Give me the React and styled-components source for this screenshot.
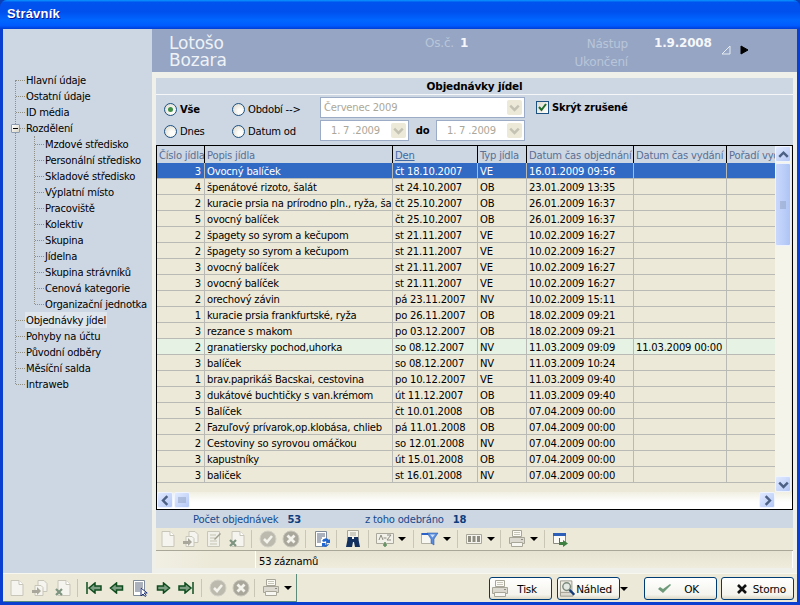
import React from "react";
import styled, { createGlobalStyle } from "styled-components";

const GlobalStyle = createGlobalStyle`
  html, body {
    margin: 0;
    padding: 0;
    background: #0a3fb5;
    overflow: hidden;
  }
  * {
    box-sizing: border-box;
  }
`;

const Window = styled.div`
  width: 800px;
  height: 605px;
  display: flex;
  flex-direction: column;
  font-family: "DejaVu Sans", sans-serif;
  font-size: 10px;
  letter-spacing: -0.2px;
  color: #000;
  background: #0a3fd0;
  border-radius: 7px 7px 0 0;
  overflow: hidden;
`;

const TitleBar = styled.div`
  height: 29px;
  flex: none;
  display: flex;
  align-items: center;
  padding: 0 0 2px 7px;
  color: #fff;
  font-family: "Liberation Sans", sans-serif;
  font-weight: 700;
  font-size: 13px;
  letter-spacing: 0.2px;
  text-shadow: 1px 1px 0 #0f1089;
  background: linear-gradient(
    180deg,
    #0997ff 0,
    #0053ee 8%,
    #0050ee 40%,
    #0066ff 70%,
    #005bff 88%,
    #003dd7 100%
  );
`;

const Client = styled.div`
  flex: 1;
  margin: 0 3px 3px;
  display: flex;
  flex-direction: column;
  background: #ece9d8;
  min-height: 0;
`;

const MainRow = styled.div`
  height: 544px;
  display: flex;
  flex: none;
`;

const Sidebar = styled.nav`
  width: 149px;
  flex: none;
  padding-top: 43px;
  background: #cdd7e4;
`;

const TreeList = styled.div`
  position: relative;
  &::before {
    content: "";
    position: absolute;
    left: 12px;
    top: 8px;
    bottom: 8px;
    border-left: 1px dotted #8f8f86;
  }
`;

const SubList = styled.div`
  position: relative;
  &::before {
    content: "";
    position: absolute;
    left: 31px;
    top: 0;
    bottom: 8px;
    border-left: 1px dotted #8f8f86;
  }
`;

const TreeRow = styled.div`
  position: relative;
  height: 16px;
  line-height: 17px;
  white-space: nowrap;
  padding-left: ${(p) => (p.$sub ? 41 : 22)}px;
  &::before {
    content: "";
    position: absolute;
    left: ${(p) => (p.$sub ? 32 : 13)}px;
    width: 9px;
    top: 8px;
    border-top: 1px dotted #8f8f86;
  }
`;

const TreeLabel = styled.span`
  display: inline-block;
  height: 16px;
  padding: 0 1px;
  background: ${(p) => (p.$active ? "#dfe5ed" : "transparent")};
`;

const Expander = styled.span`
  position: absolute;
  left: 8px;
  top: 4px;
  width: 9px;
  height: 9px;
  background: linear-gradient(135deg, #fff, #d8d4c4);
  border: 1px solid #8d9bb0;
  border-radius: 1px;
  z-index: 1;
  &::after {
    content: "";
    position: absolute;
    left: 1px;
    right: 1px;
    top: 3px;
    height: 1px;
    background: #000;
  }
`;

const Content = styled.div`
  flex: 1;
  display: flex;
  flex-direction: column;
  background: #f0f0ea;
  min-width: 0;
`;

const Header = styled.header`
  height: 43px;
  flex: none;
  display: flex;
  padding: 6px 0 0 17px;
  background: #95a5c3;
  color: #b9c5da;
  font-size: 12px;
  margin-bottom: 6px;
`;

const PersonName = styled.div`
  width: 256px;
  flex: none;
  color: #eef2f7;
  font-size: 17px;
  line-height: 17px;
`;

const OsBlock = styled.div`
  width: 130px;
  flex: none;
  display: flex;
  gap: 6px;
  height: 16px;
  line-height: 17px;
  b {
    color: #f5f7fa;
  }
`;

const DateLabels = styled.div`
  width: 73px;
  flex: none;
  text-align: right;
  line-height: 18px;
`;

const DateValue = styled.div`
  width: 66px;
  margin-left: 26px;
  flex: none;
  color: #f5f7fa;
  font-weight: 700;
  line-height: 16px;
`;

const Arrows = styled.div`
  display: flex;
  gap: 8px;
  margin-top: 10px;
  height: 10px;
`;

const Panel = styled.section`
  flex: 1;
  margin: 0 4px 5px;
  display: flex;
  flex-direction: column;
  background: #cdd7e4;
  min-height: 0;
`;

const PanelTitle = styled.div`
  height: 17px;
  flex: none;
  line-height: 16px;
  text-align: center;
  font-weight: 700;
  font-size: 10.5px;
  border-bottom: 1px solid #f4f6f8;
`;

const Filter = styled.div`
  height: 50px;
  flex: none;
  padding: 2px 0 0 8px;
  display: grid;
  grid-template-columns: 68px 88px 205px auto;
  grid-template-rows: 21px 21px;
  row-gap: 2px;
  align-items: center;
`;

const RadioLabel = styled.div`
  display: flex;
  align-items: center;
  gap: 3px;
  padding-top: ${(p) => (p.$first ? 3 : 1)}px;
  font-weight: ${(p) => (p.$bold ? 700 : 400)};
`;

const RadioDot = styled.span`
  width: 13px;
  height: 13px;
  flex: none;
  border-radius: 50%;
  border: 1px solid #1c5180;
  background: radial-gradient(circle at 65% 65%, #fdfdfb 20%, #dcd9cc 90%);
  display: flex;
  align-items: center;
  justify-content: center;
  &::after {
    content: "";
    width: 5px;
    height: 5px;
    border-radius: 50%;
    background: ${(p) => (p.$on ? "#3f8f47" : "transparent")};
  }
`;

const Field = styled.div`
  width: ${(p) => (p.$wide ? "205px" : "89px")};
  height: 21px;
  flex: none;
  display: flex;
  align-items: center;
  justify-content: space-between;
  padding: 0 2px 0 ${(p) => (p.$wide ? 3 : 10)}px;
  background: #fff;
  border: 1px solid #9cacc7;
  color: #aca899;
  font-weight: 400;
`;

const FieldButton = styled.span`
  width: 15px;
  height: 15px;
  display: flex;
  align-items: center;
  justify-content: center;
  background: #ece9d8;
  border-radius: 2px;
`;

const DateRow = styled.div`
  display: flex;
  align-items: center;
  justify-content: space-between;
  font-weight: 700;
`;

const CheckLabel = styled.div`
  display: flex;
  align-items: center;
  gap: 3px;
  margin-left: 11px;
  font-weight: 700;
`;

const CheckBox = styled.span`
  width: 13px;
  height: 13px;
  display: flex;
  align-items: center;
  justify-content: center;
  border: 1px solid #1c5180;
  background: linear-gradient(135deg, #dcd9cc, #fff);
`;

const GridFrame = styled.div`
  height: 365px;
  flex: none;
  display: flex;
  flex-direction: column;
  border: 1px solid #000;
  background: #ece9d8;
`;

const GridMain = styled.div`
  flex: 1;
  display: flex;
  min-height: 0;
`;

const TableArea = styled.div`
  width: 618px;
  flex: none;
  overflow: hidden;
`;

const Table = styled.table`
  width: 618px;
  table-layout: fixed;
  border-collapse: separate;
  border-spacing: 0;
`;

const HeadCell = styled.th`
  height: 17px;
  padding: 1px 0 0 2px;
  text-align: left;
  font-weight: 400;
  white-space: nowrap;
  overflow: hidden;
  color: ${(p) => (p.$sorted ? "#3f6aa5" : "#5a6f93")};
  text-decoration: ${(p) => (p.$sorted ? "underline" : "none")};
  background: #cdd7e4;
  border-right: 1px solid #000;
  &:last-child {
    border-right: 0;
  }
`;

const Row = styled.tr`
  color: ${(p) => (p.$selected ? "#fff" : "#000")};
  background: ${(p) =>
    p.$selected ? "#316ac5" : p.$done ? "#e6f2e3" : "#ece9d8"};
`;

const Cell = styled.td`
  height: 16px;
  padding: 1px ${(p) => (p.$num ? 3 : 0)}px 0 2px;
  text-align: ${(p) => (p.$num ? "right" : "left")};
  white-space: nowrap;
  overflow: hidden;
  border-right: 1px solid #b9b9b6;
  border-bottom: 1px solid #b9b9b6;
  &:last-child {
    border-right: 0;
  }
`;

const VScroll = styled.div`
  width: 16px;
  flex: none;
  display: flex;
  flex-direction: column;
  background: #f5f4ea;
`;

const ScrollArrow = styled.div`
  width: 16px;
  height: 16px;
  flex: none;
  display: flex;
  align-items: center;
  justify-content: center;
  border: 1px solid #f0f4fd;
  border-radius: 2px;
  background: linear-gradient(135deg, #e1eaff, #b4c8f6);
`;

const VTrack = styled.div`
  flex: 1;
  padding-top: 1px;
`;

const VThumb = styled.div`
  height: 83px;
  display: flex;
  align-items: center;
  justify-content: center;
  border: 1px solid #eef2fd;
  border-radius: 2px;
  background: linear-gradient(90deg, #c9d8fc, #bacdf8 60%, #aec4f4);
`;

const HScroll = styled.div`
  height: 17px;
  flex: none;
  display: flex;
  background: linear-gradient(180deg, #f1efe2, #fff 60%);
  padding-right: 17px;
`;

const HThumb = styled(ScrollArrow)`
  margin-left: 1px;
`;

const HSpacer = styled.div`
  flex: 1;
`;

const Summary = styled.div`
  height: 18px;
  flex: none;
  display: flex;
  align-items: center;
  padding-left: 37px;
  color: #164a8c;
  b {
    margin-left: 6px;
    color: #0d3d7c;
  }
`;

const SummaryItem = styled.span`
  width: ${(p) => p.$width}px;
  flex: none;
`;

const Toolbar = styled.div`
  height: 23px;
  flex: none;
  display: flex;
  align-items: center;
  background: #ece9d8;
  border-bottom: 1px solid #a9a797;
`;

const ToolButton = styled.span`
  width: 23px;
  height: 20px;
  flex: none;
  display: flex;
  align-items: center;
  justify-content: center;
`;

const Caret = styled.span`
  width: ${(p) => p.$width || 12}px;
  flex: none;
  display: flex;
  justify-content: center;
  &::after {
    content: "";
    border-left: 4px solid transparent;
    border-right: 4px solid transparent;
    border-top: 4px solid #000;
  }
`;

const Sep = styled.span`
  width: 1px;
  height: 18px;
  flex: none;
  margin: 0 4px 0 ${(p) => p.$left || 3}px;
  background: #c9c6b5;
`;

const StatusBar = styled.div`
  height: 17px;
  flex: none;
  display: flex;
  background: linear-gradient(180deg, #e6e3d2, #efecdd);
  border-right: 1px solid #fff;
`;

const StatusLeft = styled.div`
  width: 100px;
  flex: none;
  background: linear-gradient(90deg, #f1efe3, #ece9d8 60%);
  border-right: 1px solid #fff;
`;

const StatusText = styled.div`
  padding: 2px 0 0 3px;
  line-height: 17px;
`;

const BottomBar = styled.footer`
  flex: 1;
  display: flex;
  align-items: stretch;
  justify-content: space-between;
  background: #ece9d8;
  border-top: 1px solid #f7f6ef;
`;

const NavTools = styled.div`
  width: 294px;
  flex: none;
  display: flex;
  align-items: center;
  padding-left: 2px;
  border-right: 1px solid #5b8c7c;
  border-bottom: 1px solid #5b8c7c;
`;

const Actions = styled.div`
  display: flex;
  align-items: center;
  padding: 1px 3px 0 0;
`;

const PushButton = styled.div`
  width: ${(p) => p.$width || 63}px;
  height: 23px;
  margin-left: ${(p) => p.$left || 0}px;
  flex: none;
  display: flex;
  align-items: center;
  justify-content: space-between;
  padding: 0 ${(p) => p.$padRight}px 0 ${(p) => p.$padLeft}px;
  border: 1px solid #003c74;
  border-radius: 3px;
  font-size: 10.5px;
  background: linear-gradient(180deg, #fff, #f4f3ec 80%, #dcd8c7);
`;

const Ic = ({ children, w = 18, h = 18 }) => (
  <svg width={w} height={h} viewBox={`0 0 ${w} ${h}`}>
    {children}
  </svg>
);

const PageIcon = () => (
  <Ic>
    <path d="M3 1.5h8l4 4v11H3z" fill="#f5f4ee" stroke="#c8c6b8" />
    <path d="M11 1.5v4h4" fill="#fff" stroke="#c8c6b8" />
  </Ic>
);

const CopyIcon = () => (
  <Ic>
    <path d="M7 1.5h6l3 3v8H7z" fill="#f5f4ee" stroke="#c8c6b8" />
    <path d="M4 6.5h6l2 2v8H4z" fill="#f5f4ee" stroke="#c8c6b8" />
    <path d="M1 11h5V8l4 4-4 4v-2H1z" fill="#a9a79c" />
  </Ic>
);

const EditIcon = () => (
  <Ic>
    <path d="M2.5 1.5h12v15h-12z" fill="#f1f0e8" stroke="#c8c6b8" />
    <path d="M5 5h6M5 8h5M5 11h7M5 14h7" stroke="#c5c3b4" />
    <path d="M9 9l6-6 1 1-6 6z" fill="#9f9d90" />
  </Ic>
);

const DeleteIcon = () => (
  <Ic>
    <path d="M4 1.5h8l4 4v11H4z" fill="#f5f4ee" stroke="#c8c6b8" />
    <path d="M12 1.5v4h4" fill="#fff" stroke="#c8c6b8" />
    <path d="M2 10l6 6M8 10l-6 6" stroke="#7d9480" strokeWidth="2.2" />
  </Ic>
);

const CheckRound = () => (
  <Ic>
    <circle cx="9" cy="9" r="8" fill="#bcbaae" stroke="#d3d1c6" />
    <path d="M5 9l3 3 5-6" fill="none" stroke="#f4f3ec" strokeWidth="2.6" />
  </Ic>
);

const CrossRound = () => (
  <Ic>
    <circle cx="9" cy="9" r="8" fill="#a9a79c" stroke="#c9c7bb" />
    <path d="M5.5 5.5l7 7M12.5 5.5l-7 7" stroke="#f4f3ec" strokeWidth="2.8" />
  </Ic>
);

const RefreshIcon = () => (
  <Ic>
    <path d="M2.5 1.5h11v15h-11z" fill="#fff" stroke="#7f8b99" />
    <path d="M4 4h8M4 6h8M4 8h5M4 10h4M4 12h4" stroke="#56657a" />
    <path d="M9 11a4 4 0 0 1 7-1l1-1v4h-4l1-1a2 2 0 0 0-3 0z" fill="#1f66d1" />
    <path d="M16 14a4 4 0 0 1-6 2l-1 1v-4h4l-1 1a2 2 0 0 0 3 0z" fill="#1f66d1" />
  </Ic>
);

const FindIcon = () => (
  <Ic>
    <path d="M3.500 0.500h11v9h-11z" fill="#f4f3ec" stroke="#a8a699" />
    <path d="M6 3h6M6 5h6" stroke="#a8a699" />
    <path d="M4 7h4v2h2V7h4l2 10h-5l-1-5H9l-1 5H2z" fill="#12305f" />
  </Ic>
);

const SortIcon = () => (
  <Ic w={20}>
    <path d="M1.5 3.5h17v10h-17z" fill="#f2f1e9" stroke="#aaa89b" />
    <path d="M4 10l2-5 2 5M12 5h4l-4 5h4M8.5 8h3" fill="none" stroke="#8e8c80" />
    <path d="M10 12v5M8 15h4" stroke="#5e8d5e" strokeWidth="1.5" />
  </Ic>
);

const FunnelIcon = () => (
  <Ic w={20}>
    <path d="M1.5 3.5h12v10h-12z" fill="#f7f6f0" stroke="#b3b1a4" />
    <path d="M1.5 3h12v2h-12z" fill="#2c62c8" />
    <path d="M7 3h11l-4 6v6l-3-2V9z" fill="#5b8ede" stroke="#1b4da8" strokeWidth="0.5" />
    <path d="M10 4.500h5l-2.500 3z" fill="#cfe0f8" />
  </Ic>
);

const ColumnsIcon = () => (
  <Ic w={20}>
    <path d="M2.5 4.5h15v9h-15z" fill="#f5f4ee" stroke="#a8a699" />
    <path d="M4 6h3v6H4zM8.5 6h3v6h-3zM13 6h3v6h-3z" fill="#8e8c80" />
  </Ic>
);

const PrinterIcon = () => (
  <Ic w={18} h={18}>
    <path d="M4.500 0.500h9v6h-9z" fill="#fbfaf5" stroke="#a8a699" />
    <path d="M6 2.500h6M6 4.500h6" stroke="#c8c6b8" />
    <path d="M1.500 7.500h15v6h-15z" fill="#dcdad0" stroke="#a8a699" />
    <path d="M3.500 12.500h11v4h-11z" fill="#f7f6f0" stroke="#a8a699" />
    <path d="M13 9.500h2" stroke="#8e8c80" />
  </Ic>
);

const WindowArrowIcon = () => (
  <Ic w={18}>
    <path d="M1.500 3.500h12v10h-12z" fill="#fbfaf5" stroke="#8a8a80" />
    <path d="M1 3h13v3H1z" fill="#2d5fb8" />
    <path d="M8 8v4h3v-2l5 3.500-5 3.500v-2H7V8z" fill="#3f7f3f" />
  </Ic>
);

const GreenArrow = ({ flip, bar }) => (
  <svg width="16" height="12" viewBox="0 0 16 12">
    <g transform={flip ? "matrix(-1 0 0 1 16 0)" : undefined}>
      <path
        d={bar ? "M1 4h6V1l6 5-6 5V8H1z" : "M2.500 4h6V1l6 5-6 5V8h-6z"}
        fill="#7f9f85"
        stroke="#0f4d1f"
        strokeWidth="1.500"
      />
      {bar && <path d="M15 0v12" stroke="#0f4d1f" strokeWidth="1.500" />}
    </g>
  </svg>
);

const DocCursorIcon = () => (
  <Ic>
    <path d="M2.500 1.500h11v15h-11z" fill="#fff" stroke="#7f8b99" />
    <path d="M4 4h8M4 6h8M4 8h8M4 10h5M4 12h5" stroke="#56657a" />
    <path d="M10 9v8l2-2 2 2.500 1.200-1-2-2.500h3z" fill="#fff" stroke="#1c2f70" />
  </Ic>
);

const PreviewIcon = () => (
  <Ic>
    <path d="M1.500 0.500h12v14h-12z" fill="#eeede5" stroke="#9a988b" />
    <path d="M1.500 12.500h13v4h-13z" fill="#dcdad0" stroke="#9a988b" />
    <circle cx="8" cy="6.500" r="4" fill="#e4e9e3" stroke="#7c8a7c" strokeWidth="1.500" />
    <path d="M11 10l5 5" stroke="#123b7c" strokeWidth="2.500" />
  </Ic>
);

const Chevron = ({ up, left, right, color = "#4d6185", size = 11 }) => {
  const d = up
    ? "M1 6.500l3.500-3.500L8 6.500"
    : left
      ? "M6 1L2.500 4.500 6 8"
      : right
        ? "M3 1l3.500 3.500L3 8"
        : "M1 3l3.500 3.500L8 3";
  return (
    <svg width={size} height={size} viewBox="0 0 9 9">
      <path d={d} fill="none" stroke={color} strokeWidth="2" />
    </svg>
  );
};

const Grip = ({ vertical }) => (
  <svg width="8" height="8" viewBox="0 0 8 8">
    <path
      d={vertical ? "M1 1v6M3 1v6M5 1v6M7 1v6" : "M1 1h6M1 3h6M1 5h6M1 7h6"}
      stroke="#8fa0c0"
    />
  </svg>
);

const Triangle = ({ filled }) => (
  <svg width="12" height="10" viewBox="0 0 12 10">
    <path
      d={filled ? "M1 1l7 4-7 4z" : "M10 1v8H2z"}
      fill={filled ? "#000" : "none"}
      stroke={filled ? "#000" : "#e6ecf4"}
    />
  </svg>
);

const tree = {
  top: ["Hlavní údaje", "Ostatní údaje", "ID média", "Rozdělení"],
  sub: [
    "Mzdové středisko",
    "Personální středisko",
    "Skladové středisko",
    "Výplatní místo",
    "Pracoviště",
    "Kolektiv",
    "Skupina",
    "Jídelna",
    "Skupina strávníků",
    "Cenová kategorie",
    "Organizační jednotka",
  ],
  rest: ["Objednávky jídel", "Pohyby na účtu", "Původní odběry", "Měsíční salda", "Intraweb"],
};

const columns = [
  { title: "Číslo jídla", width: 48 },
  { title: "Popis jídla", width: 188 },
  { title: "Den", width: 85, sorted: true },
  { title: "Typ jídla", width: 49 },
  { title: "Datum čas objednání", width: 107 },
  { title: "Datum čas vydání", width: 93 },
  { title: "Pořadí vydání", width: 48 },
];

const orders = [
  [3, "Ovocný balíček", "čt 18.10.2007", "VE", "16.01.2009 09:56"],
  [4, "špenátové rizoto, šalát", "st 24.10.2007", "OB", "23.01.2009 13:35"],
  [2, "kuracie prsia na prírodno pln., ryža, šalát", "čt 25.10.2007", "OB", "26.01.2009 16:37"],
  [5, "ovocný balíček", "čt 25.10.2007", "OB", "26.01.2009 16:37"],
  [2, "špagety so syrom a kečupom", "st 21.11.2007", "VE", "10.02.2009 16:27"],
  [2, "špagety so syrom a kečupom", "st 21.11.2007", "VE", "10.02.2009 16:27"],
  [3, "ovocný balíček", "st 21.11.2007", "VE", "10.02.2009 16:27"],
  [3, "ovocný balíček", "st 21.11.2007", "VE", "10.02.2009 16:27"],
  [2, "orechový závin", "pá 23.11.2007", "NV", "10.02.2009 15:11"],
  [1, "kuracie prsia frankfurtské, ryža", "po 26.11.2007", "OB", "18.02.2009 09:21"],
  [3, "rezance s makom", "po 03.12.2007", "OB", "18.02.2009 09:21"],
  [2, "granatiersky pochod,uhorka", "so 08.12.2007", "NV", "11.03.2009 09:09", "11.03.2009 00:00"],
  [3, "balíček", "so 08.12.2007", "NV", "11.03.2009 10:24"],
  [1, "brav.paprikáš Bacskai, cestovina", "po 10.12.2007", "VE", "11.03.2009 09:40"],
  [3, "dukátové buchtičky s van.krémom", "út 11.12.2007", "OB", "11.03.2009 09:40"],
  [5, "Balíček", "čt 10.01.2008", "OB", "07.04.2009 00:00"],
  [2, "Fazuľový prívarok,op.klobása, chlieb", "pá 11.01.2008", "OB", "07.04.2009 00:00"],
  [2, "Cestoviny so syrovou omáčkou", "so 12.01.2008", "NV", "07.04.2009 00:00"],
  [3, "kapustníky", "út 15.01.2008", "OB", "07.04.2009 00:00"],
  [3, "baliček", "st 16.01.2008", "NV", "07.04.2009 00:00"],
];

function App() {
  return (
    <Window>
      <GlobalStyle />
      <TitleBar>Strávník</TitleBar>
      <Client>
        <MainRow>
          <Sidebar>
            <TreeList>
              {tree.top.map((item) => (
                <TreeRow key={item}>
                  {item === "Rozdělení" && <Expander />}
                  <TreeLabel>{item}</TreeLabel>
                </TreeRow>
              ))}
              <SubList>
                {tree.sub.map((item) => (
                  <TreeRow key={item} $sub>
                    <TreeLabel>{item}</TreeLabel>
                  </TreeRow>
                ))}
              </SubList>
              {tree.rest.map((item) => (
                <TreeRow key={item}>
                  <TreeLabel $active={item === "Objednávky jídel"}>{item}</TreeLabel>
                </TreeRow>
              ))}
            </TreeList>
          </Sidebar>
          <Content>
            <Header>
              <PersonName>
                Lotošo
                <br />
                Bozara
              </PersonName>
              <OsBlock>
                Os.č. <b>1</b>
              </OsBlock>
              <DateLabels>
                Nástup
                <br />
                Ukončení
              </DateLabels>
              <DateValue>1.9.2008</DateValue>
              <Arrows>
                <Triangle />
                <Triangle filled />
              </Arrows>
            </Header>
            <Panel>
              <PanelTitle>Objednávky jídel</PanelTitle>
              <Filter>
                <RadioLabel $bold $first>
                  <RadioDot $on />
                  Vše
                </RadioLabel>
                <RadioLabel $first>
                  <RadioDot />
                  Období --&gt;
                </RadioLabel>
                <Field $wide>
                  Červenec 2009
                  <FieldButton>
                    <Chevron color="#c4c2b3" />
                  </FieldButton>
                </Field>
                <CheckLabel>
                  <CheckBox>
                    <svg width="9" height="9" viewBox="0 0 9 9">
                      <path d="M1 4l2.500 3L8 1" fill="none" stroke="#1f6b2a" strokeWidth="2" />
                    </svg>
                  </CheckBox>
                  Skrýt zrušené
                </CheckLabel>
                <RadioLabel>
                  <RadioDot />
                  Dnes
                </RadioLabel>
                <RadioLabel>
                  <RadioDot />
                  Datum od
                </RadioLabel>
                <DateRow>
                  <Field>
                    1. 7 .2009
                    <FieldButton>
                      <Chevron color="#c4c2b3" />
                    </FieldButton>
                  </Field>
                  do
                  <Field>
                    1. 7 .2009
                    <FieldButton>
                      <Chevron color="#c4c2b3" />
                    </FieldButton>
                  </Field>
                </DateRow>
              </Filter>
              <GridFrame>
                <GridMain>
                  <TableArea>
                    <Table>
                      <colgroup>
                        {columns.map((col) => (
                          <col key={col.title} width={col.width} />
                        ))}
                      </colgroup>
                      <thead>
                        <tr>
                          {columns.map((col) => (
                            <HeadCell key={col.title} $sorted={col.sorted}>
                              {col.title}
                            </HeadCell>
                          ))}
                        </tr>
                      </thead>
                      <tbody>
                        {orders.map((order, index) => (
                          <Row key={index} $selected={index === 0} $done={!!order[5]}>
                            <Cell $num>{order[0]}</Cell>
                            <Cell>{order[1]}</Cell>
                            <Cell>{order[2]}</Cell>
                            <Cell>{order[3]}</Cell>
                            <Cell>{order[4]}</Cell>
                            <Cell>{order[5]}</Cell>
                            <Cell />
                          </Row>
                        ))}
                      </tbody>
                    </Table>
                  </TableArea>
                  <VScroll>
                    <ScrollArrow>
                      <Chevron up />
                    </ScrollArrow>
                    <VTrack>
                      <VThumb>
                        <Grip />
                      </VThumb>
                    </VTrack>
                    <ScrollArrow>
                      <Chevron />
                    </ScrollArrow>
                  </VScroll>
                </GridMain>
                <HScroll>
                  <ScrollArrow>
                    <Chevron left />
                  </ScrollArrow>
                  <HThumb>
                    <Grip vertical />
                  </HThumb>
                  <HSpacer />
                  <ScrollArrow>
                    <Chevron right />
                  </ScrollArrow>
                </HScroll>
              </GridFrame>
              <Summary>
                <SummaryItem $width={172}>
                  Počet objednávek <b>53</b>
                </SummaryItem>
                <SummaryItem $width={200}>
                  z toho odebráno <b>18</b>
                </SummaryItem>
              </Summary>
              <Toolbar>
                <ToolButton><PageIcon /></ToolButton>
                <ToolButton><CopyIcon /></ToolButton>
                <ToolButton><EditIcon /></ToolButton>
                <ToolButton><DeleteIcon /></ToolButton>
                <Sep />
                <ToolButton><CheckRound /></ToolButton>
                <ToolButton><CrossRound /></ToolButton>
                <Sep />
                <ToolButton><RefreshIcon /></ToolButton>
                <Sep />
                <ToolButton><FindIcon /></ToolButton>
                <Sep $left={4} />
                <ToolButton><SortIcon /></ToolButton>
                <Caret />
                <Sep $left={5} />
                <ToolButton><FunnelIcon /></ToolButton>
                <Caret />
                <Sep $left={4} />
                <ToolButton><ColumnsIcon /></ToolButton>
                <Caret />
                <Sep />
                <ToolButton><PrinterIcon /></ToolButton>
                <Caret />
                <Sep $left={4} />
                <ToolButton><WindowArrowIcon /></ToolButton>
              </Toolbar>
              <StatusBar>
                <StatusLeft />
                <StatusText>53 záznamů</StatusText>
              </StatusBar>
            </Panel>
          </Content>
        </MainRow>
        <BottomBar>
          <NavTools>
            <ToolButton><PageIcon /></ToolButton>
            <ToolButton><CopyIcon /></ToolButton>
            <ToolButton><DeleteIcon /></ToolButton>
            <Sep />
            <ToolButton><GreenArrow flip bar /></ToolButton>
            <ToolButton><GreenArrow flip /></ToolButton>
            <ToolButton><DocCursorIcon /></ToolButton>
            <ToolButton><GreenArrow /></ToolButton>
            <ToolButton><GreenArrow bar /></ToolButton>
            <Sep $left={4} />
            <ToolButton><CheckRound /></ToolButton>
            <ToolButton><CrossRound /></ToolButton>
            <Sep $left={2} />
            <ToolButton><PrinterIcon /></ToolButton>
            <Caret />
          </NavTools>
          <Actions>
            <PushButton $padLeft={1} $padRight={14}>
              <PrinterIcon />
              Tisk
            </PushButton>
            <PushButton $left={5} $padLeft={1} $padRight={7}>
              <PreviewIcon />
              Náhled
            </PushButton>
            <Caret $width={8} />
            <PushButton $width={73} $left={16} $padLeft={11} $padRight={17}>
              <Ic>
                <path d="M2 9l2-2 3 2 7-5 1 1-8 8z" fill="#6f9a7a" />
              </Ic>
              OK
            </PushButton>
            <PushButton $width={73} $left={4} $padLeft={11} $padRight={7}>
              <Ic>
                <path d="M5 5l8 8M13 5l-8 8" stroke="#111" strokeWidth="2.600" />
              </Ic>
              Storno
            </PushButton>
          </Actions>
        </BottomBar>
      </Client>
    </Window>
  );
}

export default App;
